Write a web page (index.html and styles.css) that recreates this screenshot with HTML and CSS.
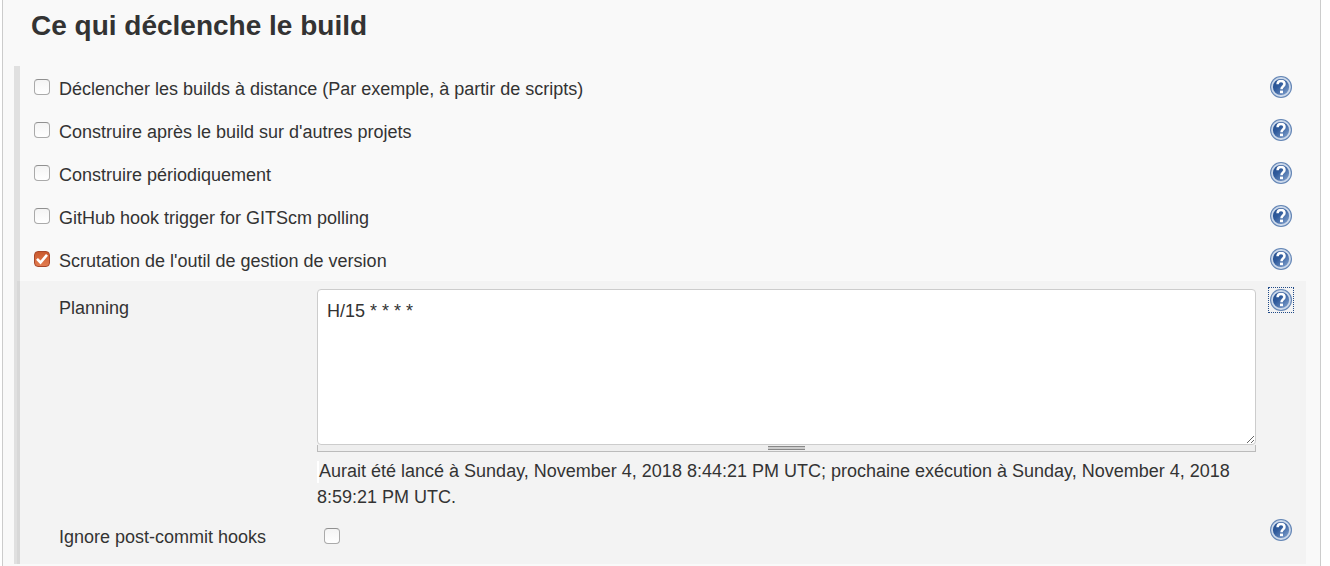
FILE: index.html
```html
<!DOCTYPE html>
<html lang="fr">
<head>
<meta charset="utf-8">
<title>Ce qui déclenche le build</title>
<link rel="stylesheet" href="styles.css">
</head>
<body>
<svg class="defs" aria-hidden="true">
  <defs>
    <linearGradient id="blue" x1="0" y1="0" x2="1" y2="1">
      <stop offset="0" stop-color="#234c8c"/>
      <stop offset="0.4" stop-color="#2f5a9b"/>
      <stop offset="1" stop-color="#8fadd6"/>
    </linearGradient>
    <symbol id="help" viewBox="0 0 22 22">
      <circle cx="11" cy="11" r="11" fill="#6385b5"/>
      <circle cx="11" cy="11" r="9" fill="url(#blue)" stroke="#cbd8ea" stroke-width="1.8"/>
      <path d="M7.6 8.2C7.6 6 9.2 5 11 5s3.5 1 3.5 3c0 2.3-3 2.4-3 5.2" fill="none" stroke="#fff" stroke-width="2.5"/>
      <rect x="10" y="14.6" width="3" height="2.6" fill="#fff"/>
    </symbol>
  </defs>
</svg>
<main class="panel">
  <h1 class="title">Ce qui déclenche le build</h1>
  <form class="group">
    <div class="row">
      <input class="check" type="checkbox" id="remote">
      <label class="label" for="remote">Déclencher les builds à distance (Par exemple, à partir de scripts)</label>
      <a class="help" href="#" aria-label="Aide"><svg class="icon"><use href="#help"/></svg></a>
    </div>
    <div class="row">
      <input class="check" type="checkbox" id="after">
      <label class="label" for="after">Construire après le build sur d'autres projets</label>
      <a class="help" href="#" aria-label="Aide"><svg class="icon"><use href="#help"/></svg></a>
    </div>
    <div class="row">
      <input class="check" type="checkbox" id="periodic">
      <label class="label" for="periodic">Construire périodiquement</label>
      <a class="help" href="#" aria-label="Aide"><svg class="icon"><use href="#help"/></svg></a>
    </div>
    <div class="row">
      <input class="check" type="checkbox" id="github">
      <label class="label" for="github">GitHub hook trigger for GITScm polling</label>
      <a class="help" href="#" aria-label="Aide"><svg class="icon"><use href="#help"/></svg></a>
    </div>
    <div class="row">
      <input class="check" type="checkbox" id="scm" checked>
      <label class="label" for="scm">Scrutation de l'outil de gestion de version</label>
      <a class="help" href="#" aria-label="Aide"><svg class="icon"><use href="#help"/></svg></a>
    </div>
    <div class="nested">
      <div class="field">
        <label class="name" for="schedule">Planning</label>
        <div class="control">
          <textarea class="schedule" id="schedule">H/15 * * * *</textarea>
          <div class="handle"><span class="grip"></span></div>
          <p class="message"><span class="marker"></span>Aurait été lancé à Sunday, November 4, 2018 8:44:21 PM UTC; prochaine exécution à Sunday, November 4, 2018 8:59:21 PM UTC.</p>
        </div>
        <a class="help focused" href="#" aria-label="Aide"><svg class="icon"><use href="#help"/></svg></a>
      </div>
      <div class="field ignore">
        <label class="name" for="hooks">Ignore post-commit hooks</label>
        <div class="control"><input class="check" type="checkbox" id="hooks"></div>
        <a class="help" href="#" aria-label="Aide"><svg class="icon"><use href="#help"/></svg></a>
      </div>
    </div>
  </form>
</main>
</body>
</html>
```
FILE: styles.css
```css
* { box-sizing: border-box; }

body {
  margin: 0;
  background: #fff;
  color: #333;
  font: 18px/26px "Liberation Sans", Arial, sans-serif;
}

.defs { position: absolute; width: 0; height: 0; }

.panel {
  min-height: 100vh;
  margin: 0 9px 0 2px;
  padding: 8px 14px 2px 11px;
  background: #f9f9f9;
  border: solid #ccc;
  border-width: 0 1px;
}

.title {
  margin: 0 0 22px 17px;
  font-size: 28px;
  line-height: 36px;
}

.group { border-left: 6px solid #e0e0e0; }

.row {
  display: flex;
  align-items: flex-start;
  height: 43px;
  padding: 10px 14px 0;
}

.label { flex: 1; padding-left: 9px; }

.check {
  appearance: none;
  flex: none;
  width: 16px;
  height: 16px;
  margin: 3px 0 0;
  background: linear-gradient(#f4f4f4, #fff);
  border: 1px solid #aaa;
  border-top-color: #909090;
  border-radius: 4px;
}

.check:checked {
  background:
    url("data:image/svg+xml,%3Csvg xmlns='http://www.w3.org/2000/svg' viewBox='0 0 14 14'%3E%3Cpath d='M2 6.8 5.5 10.5 12 2.8' fill='none' stroke='white' stroke-width='2.6'/%3E%3C/svg%3E"),
    linear-gradient(#c9592d, #e37c50);
  border-color: #a8472a;
}

.help { display: block; flex: none; width: 22px; height: 22px; }
.icon { display: block; width: 22px; height: 22px; }
.focused { outline: 1px dotted #204a87; outline-offset: 1px; }

.nested {
  margin-left: -3px;
  padding: 8px 14px 14px 39px;
  background: #f3f3f3;
  border-left: 3px solid #d8d8d8;
}

.field { display: flex; align-items: flex-start; }
.name { flex: none; width: 258px; padding-top: 6px; }
.control { flex: 1; min-width: 0; margin-right: 14px; }

.schedule {
  display: block;
  width: 100%;
  height: 156px;
  padding: 8px 9px;
  background: #fff;
  color: #333;
  border: 1px solid #ccc;
  border-radius: 4px;
  font: inherit;
}

.handle {
  display: flex;
  justify-content: center;
  height: 7px;
  padding-top: 1px;
  background: #eee;
  border: solid #bbb;
  border-width: 0 1px 1px;
}

.grip {
  width: 37px;
  height: 4px;
  background: #ccc;
  border: solid #888;
  border-width: 1px 0;
}

.message { margin: 6px 0 0; }

.marker {
  display: inline-block;
  width: 2px;
  height: 22px;
  background: #fff;
  vertical-align: middle;
}

.ignore { margin-top: 9px; }
.ignore .name { padding-top: 5px; }
.ignore .check { display: block; margin: 9px 0 0 7px; }
```
